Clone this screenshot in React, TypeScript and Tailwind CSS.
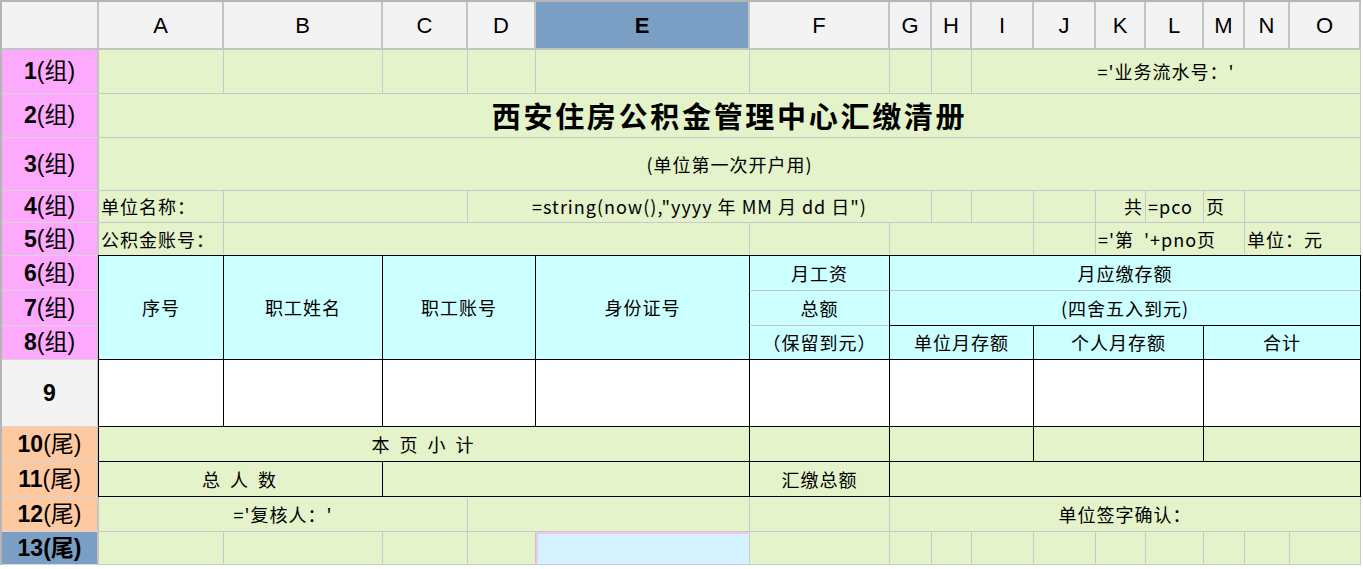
import React from 'react'

// 16 column tracks: row-header + A..O
const COLS = ['A', 'B', 'C', 'D', 'E', 'F', 'G', 'H', 'I', 'J', 'K', 'L', 'M', 'N', 'O']

const SPAN: Record<number, string> = {
  1: '',
  2: 'col-span-2',
  3: 'col-span-3',
  4: 'col-span-4',
  5: 'col-span-5',
  7: 'col-span-7',
  9: 'col-span-9',
  15: 'col-span-15',
}

type Cell = {
  span?: number
  tall?: boolean
  text?: string
  align?: 'l' | 'c' | 'r'
  bg?: 'green' | 'cyan' | 'white' | 'sel'
  box?: boolean
  softTop?: boolean
  softBottom?: boolean
  cls?: string
}

type Row = { label: string; kind: 'group' | 'plain' | 'tail' | 'tailSel'; cells: Cell[] }

const singles = (n: number): Cell[] => Array.from({ length: n }, () => ({}))

const ROWS: Row[] = [
  { label: '1', kind: 'group', cells: [...singles(8), { span: 7, text: "='业务流水号：'" }] },
  { label: '2', kind: 'group', cells: [{ span: 15, text: '西安住房公积金管理中心汇缴清册', cls: 'text-[29px] font-bold tracking-[2.7px]' }] },
  { label: '3', kind: 'group', cells: [{ span: 15, text: '(单位第一次开户用)' }] },
  {
    label: '4', kind: 'group', cells: [
      { text: '单位名称：', align: 'l' },
      { span: 2 },
      { span: 4, text: '=string(now(),"yyyy 年 MM 月 dd 日")' },
      {}, {}, {},
      { text: '共', align: 'r' },
      { text: '=pco', align: 'l' },
      { text: '页', align: 'l' },
      { span: 2 },
    ],
  },
  {
    label: '5', kind: 'group', cells: [
      { text: '公积金账号：', align: 'l' },
      { span: 4 },
      {},
      { span: 3 },
      {},
      { span: 3, text: "='第  '+pno页", align: 'l' },
      { span: 2, text: '单位：元', align: 'l' },
    ],
  },
  {
    label: '6', kind: 'group', cells: [
      { tall: true, text: '序号', bg: 'cyan', box: true },
      { tall: true, text: '职工姓名', bg: 'cyan', box: true },
      { span: 2, tall: true, text: '职工账号', bg: 'cyan', box: true },
      { tall: true, text: '身份证号', bg: 'cyan', box: true },
      { text: '月工资', bg: 'cyan', box: true, softBottom: true },
      { span: 9, text: '月应缴存额', bg: 'cyan', box: true, softBottom: true },
    ],
  },
  {
    label: '7', kind: 'group', cells: [
      { text: '总额', bg: 'cyan', box: true, softTop: true, softBottom: true },
      { span: 9, text: '(四舍五入到元)', bg: 'cyan', box: true, softTop: true },
    ],
  },
  {
    label: '8', kind: 'group', cells: [
      { text: '（保留到元）', bg: 'cyan', box: true, softTop: true },
      { span: 3, text: '单位月存额', bg: 'cyan', box: true },
      { span: 3, text: '个人月存额', bg: 'cyan', box: true },
      { span: 3, text: '合计', bg: 'cyan', box: true },
    ],
  },
  {
    label: '9', kind: 'plain', cells: [
      { bg: 'white', box: true }, { bg: 'white', box: true }, { span: 2, bg: 'white', box: true },
      { bg: 'white', box: true }, { bg: 'white', box: true }, { span: 3, bg: 'white', box: true },
      { span: 3, bg: 'white', box: true }, { span: 3, bg: 'white', box: true },
    ],
  },
  {
    label: '10', kind: 'tail', cells: [
      { span: 5, text: '本 页 小 计', box: true, cls: 'tracking-[3px]' },
      { box: true }, { span: 3, box: true }, { span: 3, box: true }, { span: 3, box: true },
    ],
  },
  {
    label: '11', kind: 'tail', cells: [
      { span: 2, text: '总 人 数', box: true, cls: 'tracking-[3px]' },
      { span: 3, box: true },
      { text: '汇缴总额', box: true },
      { span: 9, box: true },
    ],
  },
  {
    label: '12', kind: 'tail', cells: [
      { span: 3, text: "='复核人：'" },
      { span: 2 },
      {},
      { span: 9, text: '单位签字确认：' },
    ],
  },
  { label: '13', kind: 'tailSel', cells: [...singles(4), { bg: 'sel' }, ...singles(10)] },
]

const LABEL_BG: Record<Row['kind'], string> = {
  group: 'bg-[#fda9fd]',
  plain: 'bg-[#f2f3f2]',
  tail: 'bg-[#fec9a0]',
  tailSel: 'bg-[#7b9ec4]',
}

function RowLabel({ row }: { row: Row }) {
  const suffix = row.kind === 'group' ? '(组)' : row.kind === 'plain' ? '' : '(尾)'
  const boldAll = row.kind === 'tailSel'
  return (
    <div
      className={`flex items-center justify-center border-r-2 border-b border-r-[#c4c4c4] border-b-[#d6d6d6] text-[23px] text-black font-['Liberation_Sans','Noto_Sans_CJK_SC',sans-serif] ${LABEL_BG[row.kind]}`}
    >
      <span className="font-bold">{row.label}</span>
      {suffix && <span className={boldAll ? 'font-bold' : ''}>{suffix}</span>}
    </div>
  )
}

function GridCell({ c }: { c: Cell }) {
  const bg =
    c.bg === 'cyan' ? 'bg-[#ccffff]'
    : c.bg === 'white' ? 'bg-white'
    : c.bg === 'sel' ? 'bg-[#d4f2ff] border-t-2 border-l-2 border-t-[#f0c4ee] border-l-[#f0c4ee]'
    : 'bg-[#e4f3c9]'
  const align = c.align === 'l' ? 'justify-start pl-0.5' : c.align === 'r' ? 'justify-end pr-0.5' : 'justify-center'
  const border = c.box
    ? `relative z-10 -ml-px -mt-px border border-black ${c.softTop ? 'border-t-[#c4c4c4]' : ''} ${c.softBottom ? 'border-b-[#c4c4c4]' : ''}`
    : 'border-r border-b border-[#c9c9c9]'
  return (
    <div
      className={`flex items-center overflow-visible whitespace-pre text-[18px] tracking-[1px] text-black ${SPAN[c.span ?? 1]} ${c.tall ? 'row-span-3' : ''} ${bg} ${align} ${border} ${c.cls ?? ''}`}
    >
      {c.text}
    </div>
  )
}

export default function App() {
  return (
    <div className="w-[1363px] h-[569px] bg-white overflow-hidden font-['Noto_Sans_CJK_SC',sans-serif]">
      <div className="grid w-max border-l-2 border-t-2 border-[#b5b5b5] grid-cols-[97px_125px_159px_85px_68px_214px_140px_42px_40px_62px_62px_50px_58px_41px_45px_71px] grid-rows-[48px_44px_44px_53px_32px_33px_35px_35px_34px_67px_35px_35px_35px_33px]">
        <div className="bg-[#f2f3f2] border-r-2 border-b-2 border-[#c4c4c4]" />
        {COLS.map((c) => (
          <div
            key={c}
            className={`flex items-center justify-center border-r-2 border-b-2 border-[#c4c4c4] text-[22px] font-['Liberation_Sans',sans-serif] ${
              c === 'E' ? 'bg-[#7b9ec4] font-bold' : 'bg-[#f2f3f2]'
            }`}
          >
            {c}
          </div>
        ))}
        {ROWS.map((r) => (
          <React.Fragment key={r.label}>
            <RowLabel row={r} />
            {r.cells.map((c, i) => (
              <GridCell key={i} c={c} />
            ))}
          </React.Fragment>
        ))}
      </div>
    </div>
  )
}
